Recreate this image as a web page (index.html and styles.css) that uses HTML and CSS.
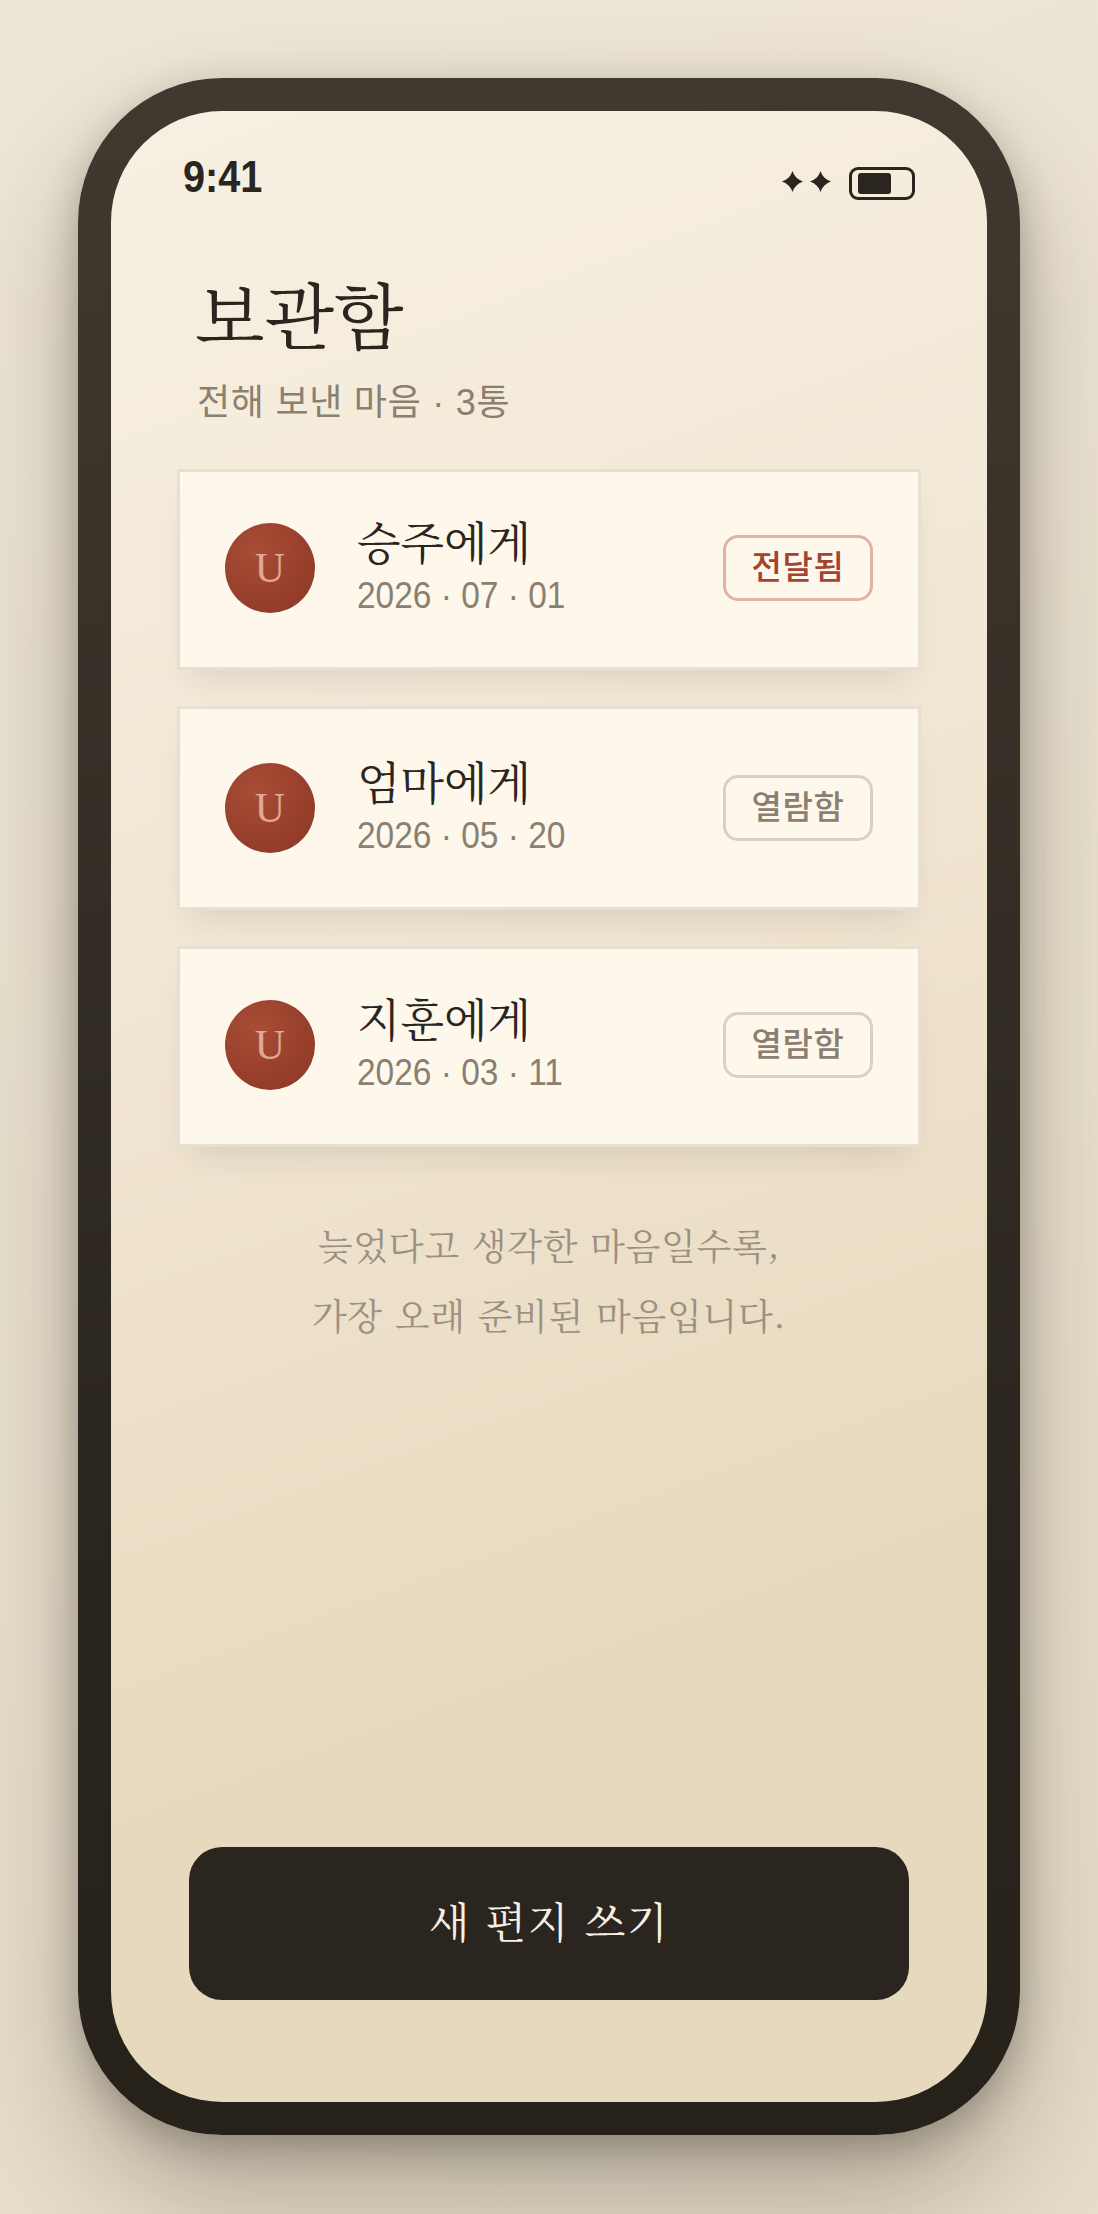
FILE: index.html
```html
<!DOCTYPE html>
<html lang="ko">
<head>
<meta charset="utf-8">
<title>보관함</title>
<link rel="stylesheet" href="styles.css">
</head>
<body>
<main class="phone">
  <div class="screen">
    <header class="status">
      <span class="time">9:41</span>
      <div class="status-icons">
        <svg class="sparks" viewBox="0 0 49 21" aria-hidden="true">
          <path d="M10.5 0C12 5 15.5 8.5 21 10.5C15.5 12.5 12 16 10.5 21C9 16 5.5 12.5 0 10.5C5.5 8.5 9 5 10.5 0Z"/>
          <path d="M38.5 0C40 5 43.5 8.5 49 10.5C43.5 12.5 40 16 38.5 21C37 16 33.5 12.5 28 10.5C33.5 8.5 37 5 38.5 0Z"/>
        </svg>
        <div class="battery"><div class="battery-fill"></div></div>
      </div>
    </header>
    <h1 class="title">보관함</h1>
    <p class="subtitle">전해 보낸 마음 · 3통</p>
    <section class="list">
      <article class="card">
        <div class="seal">U</div>
        <div class="info">
          <h2 class="name">승주에게</h2>
          <p class="date">2026 · 07 · 01</p>
        </div>
        <span class="badge badge-sent">전달됨</span>
      </article>
      <article class="card">
        <div class="seal">U</div>
        <div class="info">
          <h2 class="name">엄마에게</h2>
          <p class="date">2026 · 05 · 20</p>
        </div>
        <span class="badge">열람함</span>
      </article>
      <article class="card">
        <div class="seal">U</div>
        <div class="info">
          <h2 class="name">지훈에게</h2>
          <p class="date">2026 · 03 · 11</p>
        </div>
        <span class="badge">열람함</span>
      </article>
    </section>
    <p class="note">늦었다고 생각한 마음일수록,<br>가장 오래 준비된 마음입니다.</p>
    <button class="cta" type="button">새 편지 쓰기</button>
  </div>
</main>
</body>
</html>
```
FILE: styles.css
```css
* { box-sizing: border-box; margin: 0; padding: 0; }
html, body { width: 1098px; height: 2214px; overflow: hidden; }
body {
  background: linear-gradient(160deg, #eee6d6 0%, #e6dcc8 100%);
  padding: 78px 78px 0;
  font-family: "Noto Serif CJK KR", "Liberation Serif", serif;
  color: #2a251e;
}
.phone {
  width: 942px;
  height: 2057px;
  padding: 33px;
  border-radius: 144px;
  background: linear-gradient(180deg, #40392f 0%, #2a251e 70%, #262119 100%);
  box-shadow: 0 60px 120px rgba(42, 37, 30, 0.3), 0 12px 36px rgba(42, 37, 30, 0.28);
}
.screen {
  height: 100%;
  border-radius: 111px;
  padding: 36px 66px 102px 66px;
  background: linear-gradient(160deg, #f7f0e2 0%, #f1e6d3 40%, #e7d9bd 75%, #e7d9bd 100%);
  display: flex;
  flex-direction: column;
}
.status {
  display: flex;
  justify-content: space-between;
  align-items: center;
  height: 60px;
  padding: 0 6px 0 6px;
}
.time {
  font-family: "Liberation Sans", sans-serif;
  font-weight: 700;
  font-size: 44px;
  transform: scaleX(0.9);
  transform-origin: left center;
}
.status-icons { display: flex; align-items: center; gap: 18px; margin-top: 12px; }
.sparks { width: 49px; height: 21px; fill: #2a251e; margin-top: -3px; }
.battery {
  width: 66px;
  height: 33px;
  border: 3px solid #2a251e;
  border-radius: 9px;
  padding: 3px 6px;
}
.battery-fill { width: 33px; height: 100%; background: #2a251e; border-radius: 3px; }
.title {
  font-weight: 400;
  font-size: 72px;
  line-height: 84px;
  margin-top: 63px;
  padding-left: 18px;
}
.subtitle {
  font-family: "Liberation Sans", "Noto Sans CJK KR", sans-serif;
  font-size: 36px;
  letter-spacing: 0.72px;
  line-height: 48px;
  color: #8a7f70;
  margin-top: 25px;
  padding-left: 20px;
}
.list {
  display: flex;
  flex-direction: column;
  gap: 36px;
  margin-top: 42px;
}
.card {
  width: 744px;
  height: 201px;
  padding: 0 45px 3px;
  display: flex;
  align-items: center;
  background: #fef8ec;
  border: 3px solid #e6dfd2;
  box-shadow: 0 20px 32px -14px rgba(42, 37, 30, 0.12);
}
.card:nth-child(2) { height: 204px; padding-bottom: 0; }
.seal {
  width: 90px;
  height: 90px;
  border-radius: 50%;
  background: radial-gradient(circle at 35% 30%, #a84c35 0%, #8c3625 100%);
  color: #dfa898;
  font-family: "Liberation Serif", serif;
  font-size: 42px;
  display: flex;
  align-items: center;
  justify-content: center;
  flex: none;
}
.info { margin-left: 42px; flex: 1; padding-bottom: 5px; }
.name { font-weight: 400; font-size: 45px; line-height: 54px; }
.date {
  font-family: "Liberation Sans", sans-serif;
  font-size: 36px;
  line-height: 42px;
  margin-top: 7px;
  color: #8a7f70;
  transform: scaleX(0.93);
  transform-origin: left center;
}
.badge {
  width: 150px;
  height: 66px;
  border: 3px solid #d9d0c1;
  border-radius: 15px;
  font-family: "Liberation Sans", "Noto Sans CJK KR", sans-serif;
  font-size: 33px;
  font-weight: 500;
  letter-spacing: 0.7px;
  color: #8a7f70;
  display: flex;
  align-items: center;
  justify-content: center;
  padding-bottom: 6px;
}
.badge-sent { color: #a2442f; border-color: #dfb4a4; }
.note {
  margin-top: 63px;
  text-align: center;
  font-size: 36px;
  letter-spacing: 0.72px;
  line-height: 70px;
  color: #9b9081;
}
.cta {
  margin: auto auto 0;
  width: 720px;
  height: 153px;
  border: 0;
  border-radius: 33px;
  padding-bottom: 8px;
  background: #2a251e;
  color: #f7f0e2;
  font-family: inherit;
  font-size: 42px;
  letter-spacing: 1.68px;
}
```
